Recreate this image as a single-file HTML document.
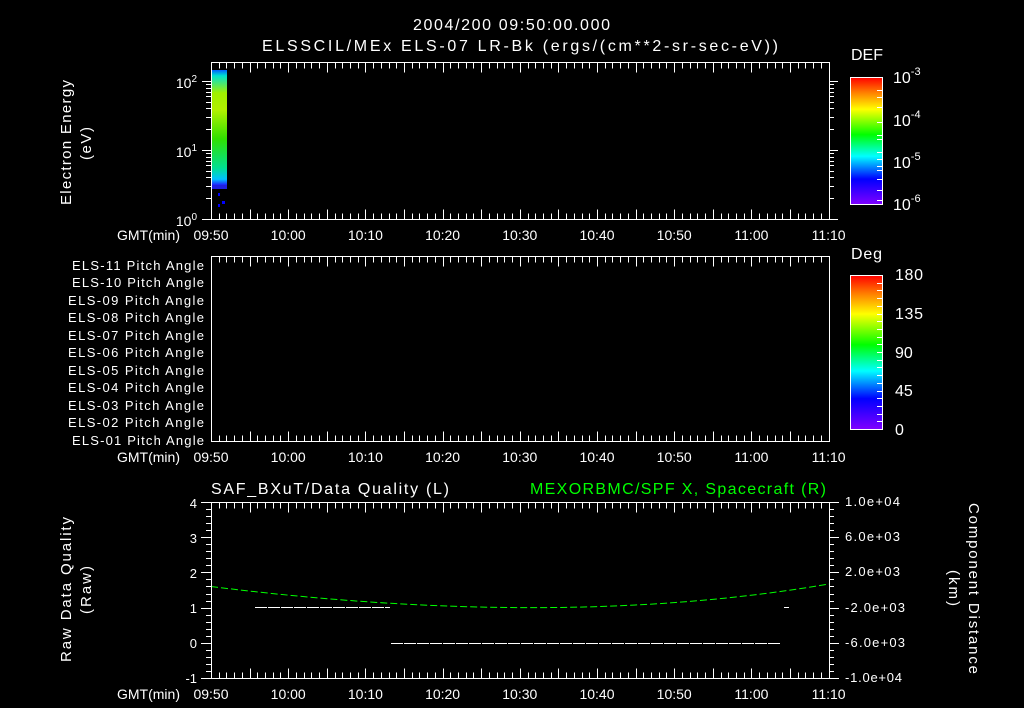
<!DOCTYPE html>
<html><head><meta charset="utf-8"><style>
html,body{margin:0;padding:0;background:#000;width:1024px;height:708px;overflow:hidden}
svg{display:block}
text{font-family:"Liberation Sans",sans-serif;font-size:13px;fill:#fff}
</style></head><body>
<svg id="s" width="1024" height="708" viewBox="0 0 1024 708">
<defs>
<linearGradient id="rb" x1="0" y1="1" x2="0" y2="0">
<stop offset="0" stop-color="#8000ff"/><stop offset="0.2" stop-color="#0000ff"/>
<stop offset="0.38" stop-color="#00ffff"/><stop offset="0.55" stop-color="#00ff00"/>
<stop offset="0.75" stop-color="#ffff00"/><stop offset="0.88" stop-color="#ff8000"/>
<stop offset="1" stop-color="#ff0000"/></linearGradient>
<linearGradient id="sp" x1="0" y1="0" x2="0" y2="1">
<stop offset="0" stop-color="#0060ff"/><stop offset="0.05" stop-color="#00e0d0"/>
<stop offset="0.2" stop-color="#a0f000"/><stop offset="0.35" stop-color="#b0f000"/>
<stop offset="0.6" stop-color="#30e000"/><stop offset="0.85" stop-color="#00e090"/>
<stop offset="0.95" stop-color="#00c0ff"/><stop offset="1" stop-color="#2020ff"/></linearGradient>
</defs>
<text x="413" y="30" textLength="197" lengthAdjust="spacing" style="font-size:16px">2004/200 09:50:00.000</text>
<text x="262" y="51" textLength="516" lengthAdjust="spacing" style="font-size:16px">ELSSCIL/MEx ELS-07 LR-Bk  (ergs/(cm**2-sr-sec-eV))</text>
<!-- panel 1 -->
<rect x="211" y="70" width="16" height="115" fill="url(#sp)"/>
<rect x="211" y="185" width="16" height="4" fill="#2020e0"/>
<rect x="218" y="193" width="2" height="3" fill="#0000ff"/><rect x="222" y="201" width="3" height="3" fill="#0000ff"/>
<rect x="218" y="204" width="2" height="3" fill="#0000ff"/>
<text x="197" y="88" text-anchor="end" style="font-size:14px">10<tspan dy="-6" style="font-size:10px">2</tspan></text>
<text x="197" y="157" text-anchor="end" style="font-size:14px">10<tspan dy="-6" style="font-size:10px">1</tspan></text>
<text x="197" y="226" text-anchor="end" style="font-size:14px">10<tspan dy="-6" style="font-size:10px">0</tspan></text>
<text transform="translate(71,205) rotate(-90)" textLength="125" lengthAdjust="spacing" style="font-size:15px">Electron Energy</text>
<text transform="translate(91,160) rotate(-90)" textLength="33" lengthAdjust="spacing" style="font-size:15px">(eV)</text>
<text x="851" y="60" textLength="32" lengthAdjust="spacing" style="font-size:16px">DEF</text>
<rect x="850.5" y="77.5" width="32" height="127" fill="url(#rb)" stroke="#fff"/>
<text x="893" y="83" style="font-size:16px">10<tspan dy="-8" style="font-size:11px">-3</tspan></text>
<text x="893" y="126" style="font-size:16px">10<tspan dy="-8" style="font-size:11px">-4</tspan></text>
<text x="893" y="168" style="font-size:16px">10<tspan dy="-8" style="font-size:11px">-5</tspan></text>
<text x="893" y="210" style="font-size:16px">10<tspan dy="-8" style="font-size:11px">-6</tspan></text>
<!-- panel 2 -->
<g>
<text x="72" y="270" textLength="132" lengthAdjust="spacing">ELS-11 Pitch Angle</text><text x="72" y="287" textLength="132" lengthAdjust="spacing">ELS-10 Pitch Angle</text>
<text x="68" y="305" textLength="136" lengthAdjust="spacing">ELS-09 Pitch Angle</text><text x="68" y="322" textLength="136" lengthAdjust="spacing">ELS-08 Pitch Angle</text>
<text x="68" y="340" textLength="136" lengthAdjust="spacing">ELS-07 Pitch Angle</text><text x="68" y="357" textLength="136" lengthAdjust="spacing">ELS-06 Pitch Angle</text>
<text x="68" y="375" textLength="136" lengthAdjust="spacing">ELS-05 Pitch Angle</text><text x="68" y="392" textLength="136" lengthAdjust="spacing">ELS-04 Pitch Angle</text>
<text x="68" y="410" textLength="136" lengthAdjust="spacing">ELS-03 Pitch Angle</text><text x="68" y="427" textLength="136" lengthAdjust="spacing">ELS-02 Pitch Angle</text>
<text x="72" y="445" textLength="132" lengthAdjust="spacing">ELS-01 Pitch Angle</text></g>
<text x="851" y="259" textLength="31" lengthAdjust="spacing" style="font-size:16px">Deg</text>
<rect x="850.5" y="275.5" width="32" height="154" fill="url(#rb)" stroke="#fff"/>
<text x="895" y="280" textLength="28" lengthAdjust="spacing" style="font-size:16px">180</text><text x="895" y="319" textLength="28" lengthAdjust="spacing" style="font-size:16px">135</text>
<text x="895" y="358" style="font-size:16px">90</text><text x="895" y="396" style="font-size:16px">45</text><text x="895" y="435" style="font-size:16px">0</text>
<!-- panel 3 -->
<text x="211" y="494" textLength="238" lengthAdjust="spacing" style="font-size:16px">SAF_BXuT/Data Quality (L)</text>
<text x="530" y="494" textLength="296" lengthAdjust="spacing" style="font-size:16px;fill:#00ff00">MEXORBMC/SPF X, Spacecraft (R)</text>
<g text-anchor="end" style="font-size:14px"><text x="197" y="508">4</text><text x="197" y="543">3</text><text x="197" y="578">2</text>
<text x="197" y="613">1</text><text x="197" y="648">0</text><text x="197" y="683">-1</text></g>
<text x="845" y="506" textLength="55" lengthAdjust="spacing">1.0e+04</text><text x="845" y="541" textLength="55" lengthAdjust="spacing">6.0e+03</text>
<text x="845" y="576" textLength="55" lengthAdjust="spacing">2.0e+03</text><text x="845" y="612" textLength="60" lengthAdjust="spacing">-2.0e+03</text>
<text x="845" y="647" textLength="60" lengthAdjust="spacing">-6.0e+03</text><text x="845" y="682" textLength="57" lengthAdjust="spacing">-1.0e+04</text>
<text transform="translate(71,662) rotate(-90)" textLength="145" lengthAdjust="spacing" style="font-size:15px">Raw Data Quality</text>
<text transform="translate(91,614) rotate(-90)" textLength="48" lengthAdjust="spacing" style="font-size:15px">(Raw)</text>
<text transform="translate(969,503) rotate(90)" textLength="171" lengthAdjust="spacing" style="font-size:15px">Component Distance</text>
<text transform="translate(949,570) rotate(90)" textLength="36" lengthAdjust="spacing" style="font-size:15px">(km)</text>
<path d="M211,586.5 Q560,630 829,584" fill="none" stroke="#00ff00" stroke-dasharray="7,3"/>
<path d="M255,607.5H390M391,643.5H781M784,607.5H789" stroke="#fff" stroke-dasharray="12,1"/>
<g id="ax" stroke="#fff" fill="none"></g>
<g id="tl"></g>
</svg>
<script>
var ax=document.getElementById('ax'),tl=document.getElementById('tl'),d='';
function L(x1,y1,x2,y2){d+='M'+x1+','+y1+'L'+x2+','+y2;}
var panels=[[62,219],[256,441],[502,678]];
var labs=['09:50','10:00','10:10','10:20','10:30','10:40','10:50','11:00','11:10'];
panels.forEach(function(p,i){
 var t=p[0]+.5,b=p[1]+.5;
 d+='M211.5,'+t+'H829.5V'+b+'H211.5Z';
 for(var m=0;m<=80;m++){var x=Math.round(211+m*7.72)+.5;var len=(m%5==0)?10:6;L(x,t,x,t+len);L(x,b,x,b-len);}
 var y=p[1]+21;
 var s='<text x="117" y="'+y+'" textLength="63" lengthAdjust="spacing" style="font-size:14px">GMT(min)</text>';
 labs.forEach(function(l,k){s+='<text x="'+(211+k*77.2)+'" y="'+y+'" text-anchor="middle" style="font-size:14px">'+l+'</text>';});
 tl.insertAdjacentHTML('beforeend',s);
});
for(var dec=0;dec<3;dec++)for(var k=1;k<10;k++){var y=219-69*(dec+Math.log10(k));if(y<62)break;y=Math.round(y)+.5;var len=k==1?9:5;L(211,y,211-len,y);L(829,y,829+len,y);}
for(var j=0;j<=25;j++){var y=Math.round(502+j*7.04)+.5;var len=j%5==0?10:5;L(211,y,211-len,y);L(829,y,829+len,y);}
[90,97,107,122,135,139,152,159,166,170,179,190,200].forEach(function(y){L(882,y+.5,877,y+.5);});
for(var j=1;j<20;j++){var y=Math.round(275+j*7.7)+.5;L(882,y,877,y);}
var pth=document.createElementNS('http://www.w3.org/2000/svg','path');pth.setAttribute('d',d);ax.appendChild(pth);
</script>
</body></html>
